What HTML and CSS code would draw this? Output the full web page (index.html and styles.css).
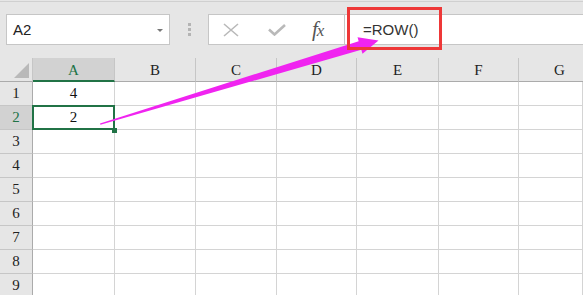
FILE: index.html
```html
<!DOCTYPE html>
<html lang="en">
<head>
  <meta charset="UTF-8">
  <title>ROW</title>
  <link rel="stylesheet" href="styles.css">
</head>
<body>
<div class="toolbar">
  <div class="namebox"><span>A2</span><span class="caret"></span></div>
  <div class="grip"><i></i><i></i><i></i></div>
  <div class="fbtns">
    <svg class="ic-x" width="16" height="14" viewBox="0 0 16 14"><path d="M1 1L15 13M15 1L1 13" stroke="#b9b9b9" stroke-width="1.6" fill="none"/></svg>
    <svg class="ic-ok" width="18" height="12" viewBox="0 0 18 12"><path d="M1 5.5L6.5 10.5L17 1" stroke="#b9b9b9" stroke-width="2.6" fill="none"/></svg>
    <span class="fx">f<small>x</small></span>
  </div>
  <div class="finput"><span>=ROW()</span></div>
</div>

<div class="sheet">
  <div class="corner"><span class="tri"></span></div>
  <div class="ch active">A</div><div class="ch">B</div><div class="ch">C</div><div class="ch">D</div><div class="ch">E</div><div class="ch">F</div><div class="ch cut">G</div>

  <div class="rh">1</div><div class="c">4</div><div class="c"></div><div class="c"></div><div class="c"></div><div class="c"></div><div class="c"></div><div class="c"></div>
  <div class="rh active">2</div><div class="c sel">2<span class="handle"></span></div><div class="c"></div><div class="c"></div><div class="c"></div><div class="c"></div><div class="c"></div><div class="c"></div>
  <div class="rh">3</div><div class="c"></div><div class="c"></div><div class="c"></div><div class="c"></div><div class="c"></div><div class="c"></div><div class="c"></div>
  <div class="rh">4</div><div class="c"></div><div class="c"></div><div class="c"></div><div class="c"></div><div class="c"></div><div class="c"></div><div class="c"></div>
  <div class="rh">5</div><div class="c"></div><div class="c"></div><div class="c"></div><div class="c"></div><div class="c"></div><div class="c"></div><div class="c"></div>
  <div class="rh">6</div><div class="c"></div><div class="c"></div><div class="c"></div><div class="c"></div><div class="c"></div><div class="c"></div><div class="c"></div>
  <div class="rh">7</div><div class="c"></div><div class="c"></div><div class="c"></div><div class="c"></div><div class="c"></div><div class="c"></div><div class="c"></div>
  <div class="rh">8</div><div class="c"></div><div class="c"></div><div class="c"></div><div class="c"></div><div class="c"></div><div class="c"></div><div class="c"></div>
  <div class="rh">9</div><div class="c"></div><div class="c"></div><div class="c"></div><div class="c"></div><div class="c"></div><div class="c"></div><div class="c"></div>
</div>

<!-- annotation: arrow from A2 to the formula, and the red frame -->
<svg class="arrow" width="583" height="295" viewBox="0 0 583 295">
  <polygon points="100,123.4 358.7,41.2 357.5,37.2 378.5,40.5 362.5,53.8 361.3,49.8 100.4,124.8" fill="#f024f0"/>
</svg>
<div class="redbox"></div>
</body>
</html>
```

FILE: styles.css
```css
html, body {
  margin: 0;
  padding: 0;
}
body {
  width: 583px;
  height: 295px;
  overflow: hidden;
  background-color: #e6e6e6;
  font-family: "Liberation Sans", Arial, sans-serif;
  position: relative;
}
.toolbar {
  display: flex;
  align-items: flex-start;
  height: 57px;
  margin-top: 1px;
  border-top: 1px solid #d0d0d0;
  box-sizing: border-box;
  padding: 12px 0 0 6px;
}
.namebox {
  display: flex;
  align-items: center;
  justify-content: space-between;
  width: 164px;
  height: 31px;
  box-sizing: border-box;
  border: 1px solid #c6c6c6;
  background-color: white;
  padding: 0 6px 0 6px;
  font-size: 15px;
  color: #222;
}
.caret {
  width: 0;
  height: 0;
  border-left: 3px solid transparent;
  border-right: 3px solid transparent;
  border-top: 3px solid #777;
  margin-top: 1px;
}
.grip {
  display: flex;
  flex-direction: column;
  gap: 2px;
  margin: 9px 0 0 18px;
}
.grip i {
  display: block;
  width: 3px;
  height: 3px;
  background-color: #b4b4b4;
}
.fbtns {
  display: flex;
  align-items: center;
  width: 137px;
  height: 31px;
  box-sizing: border-box;
  margin-left: 17px;
  border: 1px solid #c6c6c6;
  background-color: white;
}
.ic-x {
  margin-left: 14px;
}
.ic-ok {
  margin-left: 29px;
}
.fx {
  margin-left: 26px;
  font-family: "Liberation Serif", "Times New Roman", serif;
  font-style: italic;
  font-size: 21px;
  color: #555;
  letter-spacing: -1px;
}
.fx small {
  font-size: 17px;
}
.finput {
  flex: 1;
  display: flex;
  align-items: center;
  height: 31px;
  box-sizing: border-box;
  border: 1px solid #c6c6c6;
  border-left: none;
  border-right: none;
  background-color: white;
  padding-left: 18px;
  font-size: 15px;
  color: #333;
}
.sheet {
  display: grid;
  grid-template-columns: 33px 82px 81px 81px 80px 82px 80px 64px;
  grid-auto-rows: 24px;
  font-family: "Liberation Serif", "Times New Roman", serif;
  font-size: 15px;
}
.sheet > div {
  box-sizing: border-box;
  display: flex;
  align-items: center;
  justify-content: center;
}
.corner {
  background-color: #e6e6e6;
  border-right: 1px solid #c6c6c6;
  border-bottom: 1px solid #ababab;
  justify-content: flex-end !important;
  align-items: flex-end !important;
  padding: 0 3px 3px 0;
}
.tri {
  width: 0;
  height: 0;
  border-left: 15px solid transparent;
  border-bottom: 15px solid #b9b9b9;
}
.ch {
  background-color: #e6e6e6;
  border-right: 1px solid #c6c6c6;
  border-bottom: 1px solid #ababab;
  color: #222;
  padding-top: 2px;
}
.ch.cut {
  border-right: none;
  padding-left: 17px;
}
.ch.active {
  background-color: #d2d2d2;
  border-bottom: 2px solid #217346;
  color: #217346;
}
.rh {
  background-color: #e6e6e6;
  border-right: 1px solid #ababab;
  border-bottom: 1px solid #c6c6c6;
  color: #222;
}
.rh.active {
  background-color: #d2d2d2;
  color: #217346;
}
.c {
  background-color: white;
  border-right: 1px solid #d4d4d4;
  border-bottom: 1px solid #d4d4d4;
  color: #111;
}
.sel {
  position: relative;
}
.sel::after {
  content: "";
  position: absolute;
  left: -1px;
  top: -1px;
  right: -1px;
  bottom: -1px;
  border: 2px solid #217346;
}
.handle {
  position: absolute;
  left: 79px;
  top: 22px;
  width: 5px;
  height: 5px;
  background-color: #217346;
  z-index: 1;
}
.arrow {
  position: absolute;
  left: 0;
  top: 0;
}
.redbox {
  position: absolute;
  left: 347px;
  top: 7px;
  width: 95px;
  height: 43px;
  box-sizing: border-box;
  border: 3px solid #ee3838;
}
```
